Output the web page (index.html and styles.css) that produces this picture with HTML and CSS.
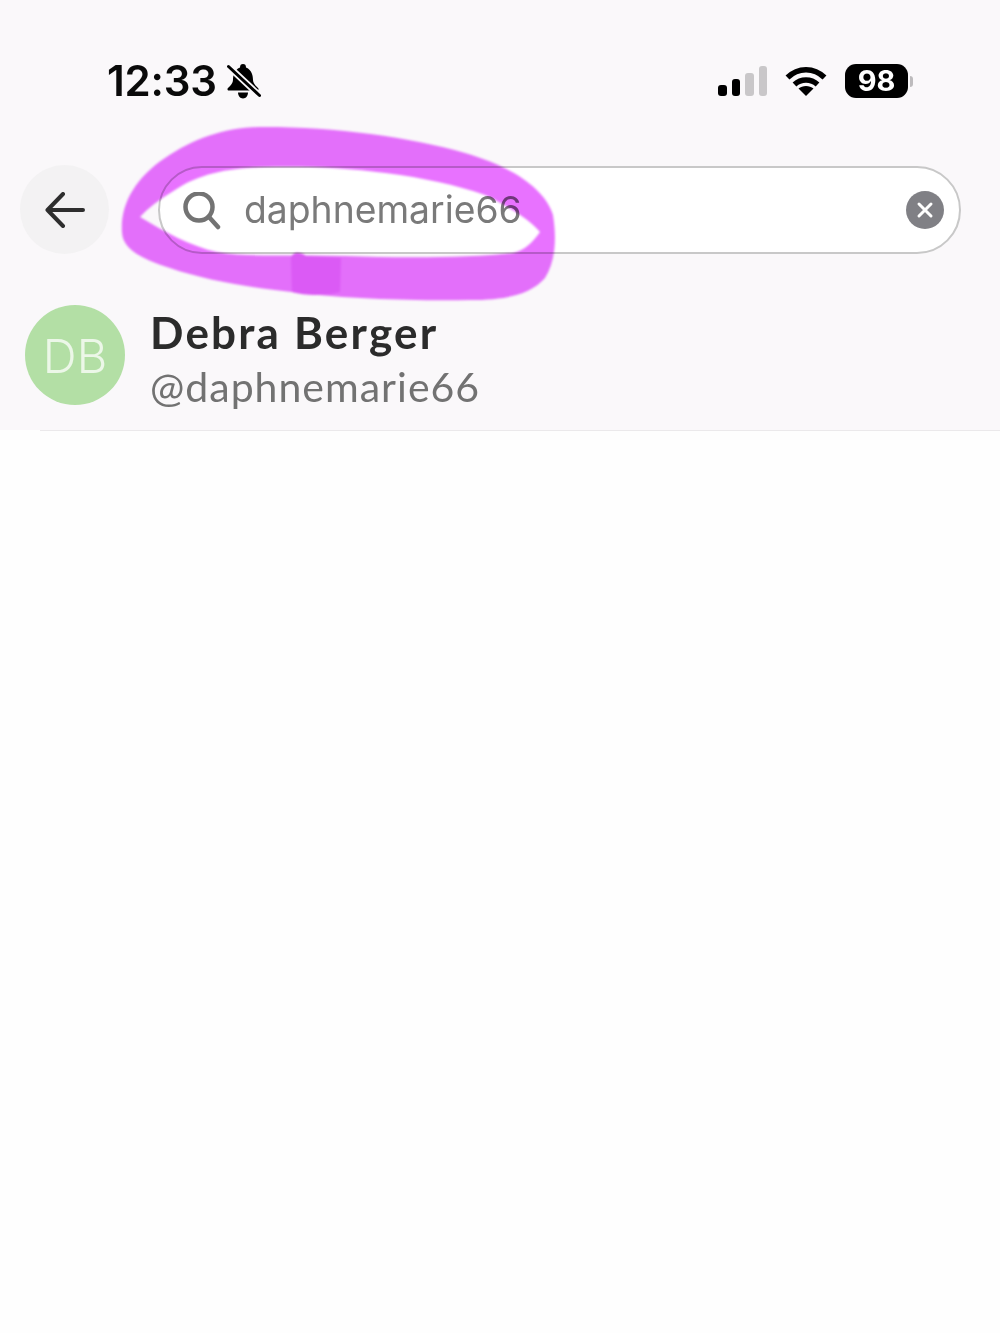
FILE: index.html
```html
<!DOCTYPE html>
<html lang="en">
<head>
    <meta charset="UTF-8">
    <meta name="viewport" content="width=device-width, initial-scale=1.0">
    <title>Search</title>
    <link rel="stylesheet" href="styles.css">
</head>
<body>
    <div class="top">
        <!-- status bar -->
        <div class="status-bar">
            <div class="status-left">
                <span class="time">12:33</span>
                <svg class="bell" width="34" height="36" viewBox="0 0 34 36">
                    <path fill="#000" d="M16 0c-2 0-3 1-3 3.500C7 6 6 12 6 16c0 3-2 5-5 8-1 1-.5 2.500 1 2.500h28c1.500 0 2-1.500 1-2.500-3-3-5-5-5-8 0-4-1-10-7-12.500C19 1 18 0 16 0z"/>
                    <path fill="#000" d="M11 28.500h10c0 3-2 6-5 6s-5-3-5-6z"/>
                    <path stroke="#faf8fa" stroke-width="6.500" d="M1 2l32 30"/>
                    <path stroke="#000" stroke-width="3" stroke-linecap="round" d="M1.500 2.500l31 29"/>
                </svg>
            </div>
            <div class="status-right">
                <div class="signal">
                    <span class="bar bar-1"></span>
                    <span class="bar bar-2"></span>
                    <span class="bar bar-3"></span>
                    <span class="bar bar-4"></span>
                </div>
                <svg class="wifi" width="42" height="30" viewBox="0 0 42 30">
                    <path fill="none" stroke="#000" stroke-width="5.500" d="M2.500 11.500C13 1 29 1 39.500 11.500"/>
                    <path fill="none" stroke="#000" stroke-width="5.500" d="M9.500 18.500C16 12.500 26 12.500 32.500 18.500"/>
                    <path fill="#000" d="M21 30l-7.500-7.500c4-3.500 11-3.500 15 0z"/>
                </svg>
                <div class="battery">
                    <div class="battery-body">98</div>
                    <div class="battery-nub"></div>
                </div>
            </div>
        </div>

        <!-- search row -->
        <div class="search-row">
            <div class="back-button">
                <svg width="40" height="36" viewBox="0 0 40 36">
                    <path fill="none" stroke="#2e2e2e" stroke-width="4" stroke-linecap="round" stroke-linejoin="round" d="M38 18H2.500M18 2L2.500 18 18 34"/>
                </svg>
            </div>
            <div class="search-box">
                <svg class="search-icon" width="38" height="38" viewBox="0 0 38 38">
                    <circle cx="16" cy="15" r="13.500" fill="none" stroke="#737373" stroke-width="4.500"/>
                    <path stroke="#737373" stroke-width="4.500" stroke-linecap="round" d="M26 25l9 10"/>
                </svg>
                <span class="search-text">daphnemarie66</span>
                <div class="clear-button">
                    <svg width="18" height="18" viewBox="0 0 18 18">
                        <path stroke="#fff" stroke-width="3" stroke-linecap="round" d="M3 3l12 12M15 3L3 15"/>
                    </svg>
                </div>
            </div>
        </div>

        <!-- result -->
        <div class="result">
            <div class="avatar">DB</div>
            <div class="result-info">
                <div class="result-name">Debra Berger</div>
                <div class="result-handle">@daphnemarie66</div>
            </div>
        </div>
    </div>
    <div class="divider"></div>

    <!-- hand drawn marker over the search box -->
    <svg class="marker" width="1000" height="320" viewBox="0 0 1000 320">
        <path class="marker-stroke" fill-rule="evenodd" d="M122 232C120 205 135 178 165 158C195 138 225 127 265 127C335 127 410 137 465 153C510 166 545 188 553 215C557 240 555 262 545 278C530 295 505 300 470 300C420 301 350 299 300 293C250 288 205 280 170 268C145 260 122 250 122 232ZM140 217C165 232 190 246 217 252C250 258 300 254 345 256C400 258 470 258 513 253C525 250 532 243 540 232C530 220 512 208 485 195C420 172 330 165 265 167C230 168 200 173 175 190C160 199 148 208 140 217Z"/>
        <path class="marker-patch" d="M291 258C292 252 300 251 306 256L341 258L340 292C325 296 305 296 292 292Z"/>
    </svg>
</body>
</html>
```

FILE: styles.css
```css
body {
    margin: 0;
    background-color: #fefefe;
    font-family: "Inter", sans-serif;
    height: 1333px;
    overflow: hidden;
    position: relative;
}

.top {
    background-color: #faf8fa;
    height: 430px;
}

.status-bar {
    display: flex;
    justify-content: space-between;
    align-items: center;
    height: 164px;
    padding: 0 87px 2px 107px;
    box-sizing: border-box;
}

.status-left {
    display: flex;
    align-items: center;
    gap: 10px;
}

.time {
    font-size: 42px;
    font-weight: 600;
    letter-spacing: -0.2px;
    line-height: 48px;
    color: #0a0a0a;
}

.bell {
    margin-top: 2px;
}

.status-right {
    display: flex;
    align-items: center;
}

.signal {
    display: flex;
    align-items: flex-end;
    gap: 5px;
    height: 30px;
    margin-right: 18px;
}

.bar {
    width: 8.500px;
    border-radius: 3px;
    background-color: #000;
}

.bar-1 { height: 11px; }
.bar-2 { height: 17px; }
.bar-3 { height: 23px; background-color: #c9c7c9; }
.bar-4 { height: 30px; background-color: #c9c7c9; }

.wifi {
    margin-right: 18px;
}

.battery {
    display: flex;
    align-items: center;
    gap: 2px;
}

.battery-body {
    width: 63px;
    height: 34px;
    border-radius: 11px;
    background-color: #000;
    color: #fff;
    font-size: 29px;
    font-weight: 700;
    line-height: 34px;
    text-align: center;
}

.battery-nub {
    width: 3px;
    height: 11px;
    border-radius: 0 3px 3px 0;
    background-color: #bdbbbd;
}

.search-row {
    display: flex;
    align-items: center;
    gap: 49px;
    padding: 1px 39px 0 20px;
}

.back-button {
    display: flex;
    justify-content: center;
    align-items: center;
    flex: none;
    width: 89px;
    height: 89px;
    border-radius: 50%;
    background-color: #f3f2f3;
}

.search-box {
    display: flex;
    align-items: center;
    flex: 1;
    height: 88px;
    padding: 0 15px 0 23px;
    box-sizing: border-box;
    background-color: #fff;
    border: 2px solid #c8c8c8;
    border-radius: 44px;
}

.search-icon {
    flex: none;
    margin-right: 23px;
    margin-top: 3px;
}

.search-text {
    flex: 1;
    font-size: 37.300px;
    color: #7a7a7a;
}

.clear-button {
    display: flex;
    justify-content: center;
    align-items: center;
    width: 38px;
    height: 38px;
    border-radius: 50%;
    background-color: #808085;
}

.result {
    display: flex;
    align-items: flex-start;
    gap: 25px;
    padding: 51px 0 0 25px;
}

.avatar {
    display: flex;
    justify-content: center;
    align-items: center;
    flex: none;
    width: 100px;
    height: 100px;
    border-radius: 50%;
    background-color: #b3dfa5;
    color: #ecf7e8;
    font-size: 47px;
    font-weight: 300;
}

.result-info {
    font-family: "Lato", sans-serif;
}

.result-name {
    font-size: 44px;
    font-weight: 700;
    letter-spacing: 2.200px;
    line-height: 54px;
    color: #2b2b2b;
}

.result-handle {
    font-size: 41px;
    letter-spacing: 1px;
    line-height: 56px;
    color: #727272;
}

.divider {
    height: 1px;
    margin-left: 40px;
    background-color: #ebe9eb;
}

.marker {
    position: absolute;
    top: 0;
    left: 0;
    mix-blend-mode: multiply;
    filter: blur(1px);
}

.marker-stroke {
    fill: #e872ff;
}

.marker-patch {
    fill: #e05cfa;
}
```
